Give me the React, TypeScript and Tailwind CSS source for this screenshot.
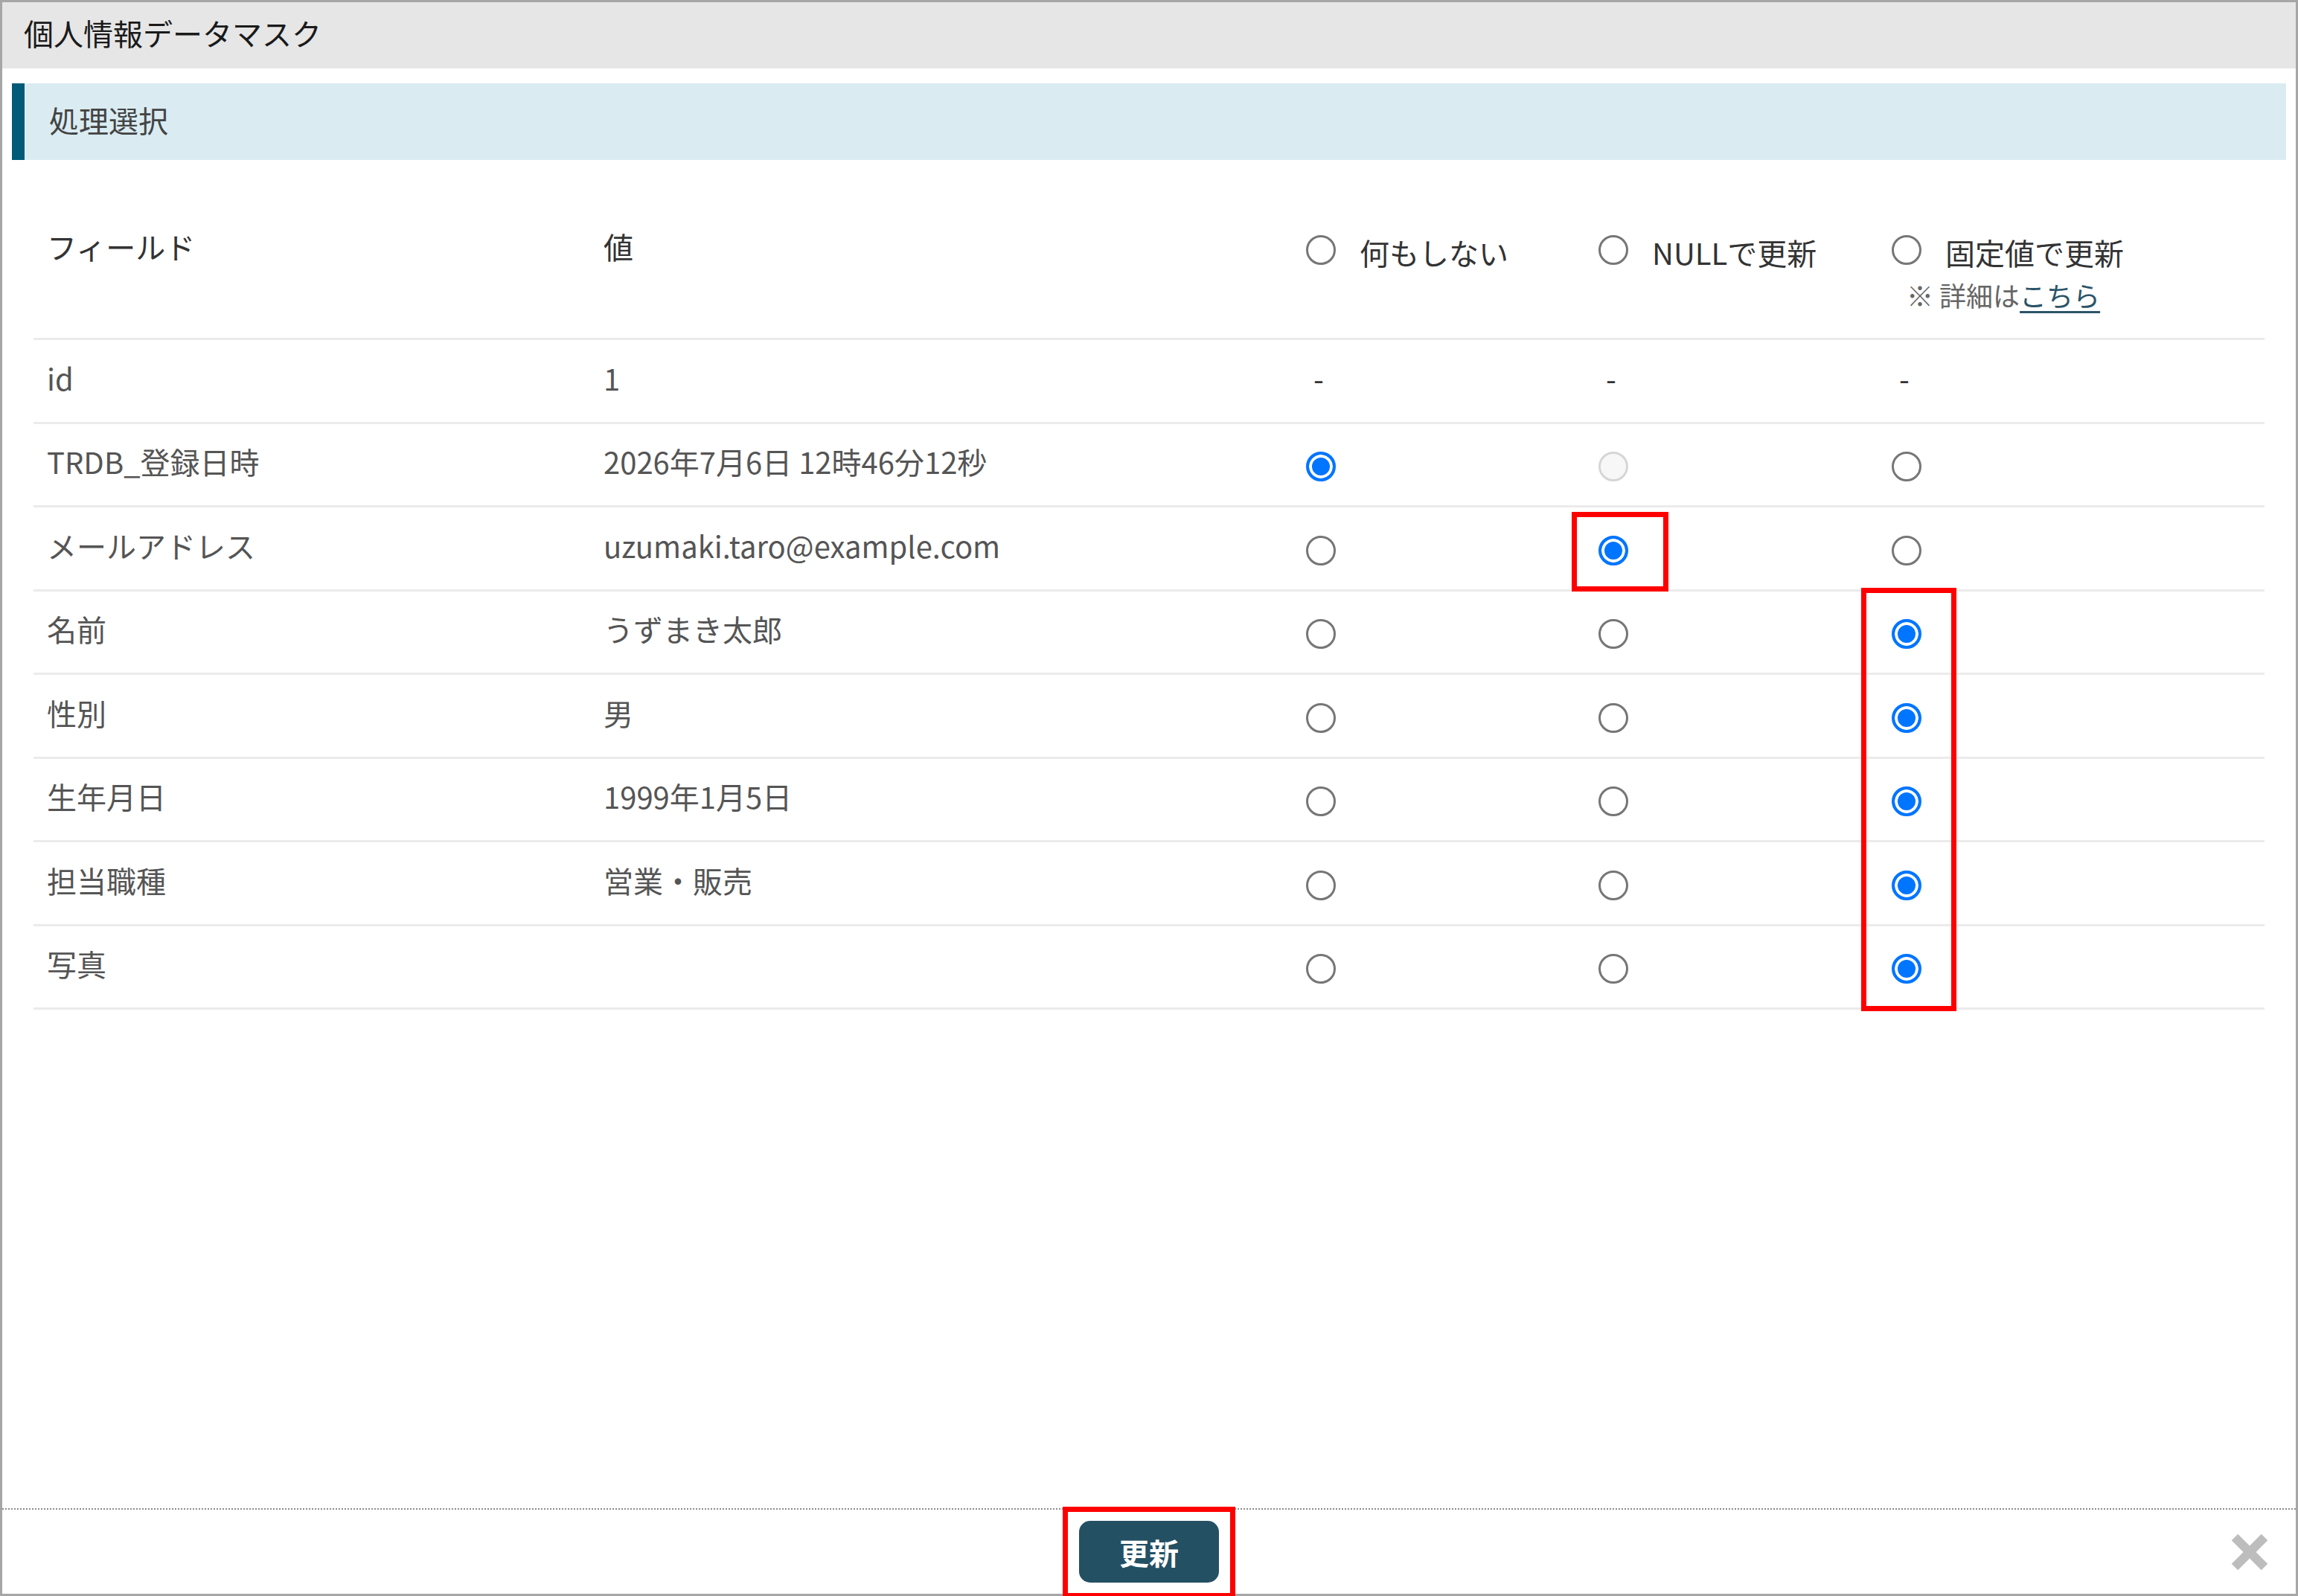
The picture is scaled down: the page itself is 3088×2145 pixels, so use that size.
type Choice = 'none' | 'null' | 'fixed';

interface Row {
  field: string;
  value: string;
  selected?: Choice;
  disabled?: Choice[];
  locked?: boolean;
}

const rows: Row[] = [
  { field: 'id', value: '1', locked: true },
  { field: 'TRDB_登録日時', value: '2026年7月6日 12時46分12秒', selected: 'none', disabled: ['null'] },
  { field: 'メールアドレス', value: 'uzumaki.taro@example.com', selected: 'null' },
  { field: '名前', value: 'うずまき太郎', selected: 'fixed' },
  { field: '性別', value: '男', selected: 'fixed' },
  { field: '生年月日', value: '1999年1月5日', selected: 'fixed' },
  { field: '担当職種', value: '営業・販売', selected: 'fixed' },
  { field: '写真', value: '', selected: 'fixed' },
];

const choices: Choice[] = ['none', 'null', 'fixed'];

function Radio({ name, checked, disabled }: { name: string; checked?: boolean; disabled?: boolean }) {
  return (
    <input
      type="radio"
      name={name}
      defaultChecked={checked}
      disabled={disabled}
      className="appearance-none m-0 w-[40px] h-[40px] shrink-0 rounded-full border-[3px] border-[#767676] bg-white checked:border-[4px] checked:border-[#0075ff] checked:bg-[#0075ff] checked:shadow-[inset_0_0_0_4px_#ffffff] disabled:border-[#d6d6d6] disabled:bg-[#f7f7f7]"
    />
  );
}

function CloseIcon() {
  return (
    <svg width="56" height="56" viewBox="0 0 56 56">
      <line x1="8" y1="8" x2="48" y2="48" stroke="#bdbdbd" strokeWidth="12" />
      <line x1="48" y1="8" x2="8" y2="48" stroke="#bdbdbd" strokeWidth="12" />
    </svg>
  );
}

export default function App() {
  return (
    <div className="relative w-[3088px] h-[2145px] flex flex-col border-[3px] border-[#a6a6a6] bg-white font-['Noto_Sans_CJK_JP',sans-serif]">
      {/* タイトル */}
      <div className="h-[89px] shrink-0 bg-[#e6e6e6] flex items-center pl-[29px] pb-[8px] text-[40px] text-[#1a1a1a]">
        個人情報データマスク
      </div>

      {/* セクション見出し */}
      <div className="mt-[20px] mx-[13px] h-[103px] shrink-0 bg-[#daecf2] border-l-[17px] border-[#005a78] flex items-center pl-[33px] pb-[6px] text-[40px] text-[#444]">
        処理選択
      </div>

      {/* テーブル */}
      <div className="mx-[42px]">
        <div className="grid grid-cols-[748px_944px_393px_394px_1fr] h-[242px] border-b-[3px] border-[#ebebeb] text-[40px] leading-[60px] text-[#333]">
          <div className="pl-[18px] pt-[86px]">フィールド</div>
          <div className="pl-[18px] pt-[86px]">値</div>
          <div className="pl-[18px] pt-[88px] flex items-start">
            <div className="flex items-center gap-[32px]">
              <Radio name="all" />
              <span className="pt-[6px]">何もしない</span>
            </div>
          </div>
          <div className="pl-[18px] pt-[88px] flex items-start">
            <div className="flex items-center gap-[32px]">
              <Radio name="all" />
              <span className="pt-[6px]">NULLで更新</span>
            </div>
          </div>
          <div className="pl-[18px] pt-[88px] flex flex-col">
            <div className="flex items-center gap-[32px]">
              <Radio name="all" />
              <span className="pt-[6px]">固定値で更新</span>
            </div>
            <div className="pl-[20px] mt-[2px] text-[36px] leading-[50px] text-[#666]">
              ※ 詳細は<span className="text-[#2b5468] underline underline-offset-[6px]">こちら</span>
            </div>
          </div>
        </div>

        {rows.map((row, i) => (
          <div
            key={i}
            className="grid grid-cols-[748px_944px_393px_394px_1fr] h-[112.5px] border-b-[3px] border-[#ebebeb] text-[40px] text-[#555]"
          >
            <div className="pl-[18px] pb-[8px] flex items-center">{row.field}</div>
            <div className="pl-[18px] pb-[8px] flex items-center">{row.value}</div>
            {choices.map((c) => (
              <div key={c} className="pl-[18px] flex items-center">
                {row.locked ? (
                  <span className="pl-[10px] pb-[8px] text-[#333]">-</span>
                ) : (
                  <div className="pt-[6px] flex">
                    <Radio name={`row-${i}`} checked={row.selected === c} disabled={row.disabled?.includes(c)} />
                  </div>
                )}
              </div>
            ))}
          </div>
        ))}
      </div>

      <div className="flex-1" />

      {/* フッター */}
      <div className="h-[115px] shrink-0 border-t-2 border-dotted border-[#8c8c8c] grid grid-cols-[1fr_auto_1fr] items-center">
        <div />
        <button className="w-[188px] h-[83px] rounded-[15px] bg-[#245064] text-white text-[40px] font-semibold">
          更新
        </button>
        <div className="justify-self-end mr-[34px] flex">
          <CloseIcon />
        </div>
      </div>

      {/* 注釈の赤枠 */}
      <div className="absolute left-[2109px] top-[685px] w-[130px] h-[107px] border-[7px] border-[#ff0000]" />
      <div className="absolute left-[2498px] top-[787px] w-[128px] h-[569px] border-[7px] border-[#ff0000]" />
      <div className="absolute left-[1425px] top-[2022px] w-[232px] h-[123px] border-[7px] border-[#ff0000]" />
    </div>
  );
}
